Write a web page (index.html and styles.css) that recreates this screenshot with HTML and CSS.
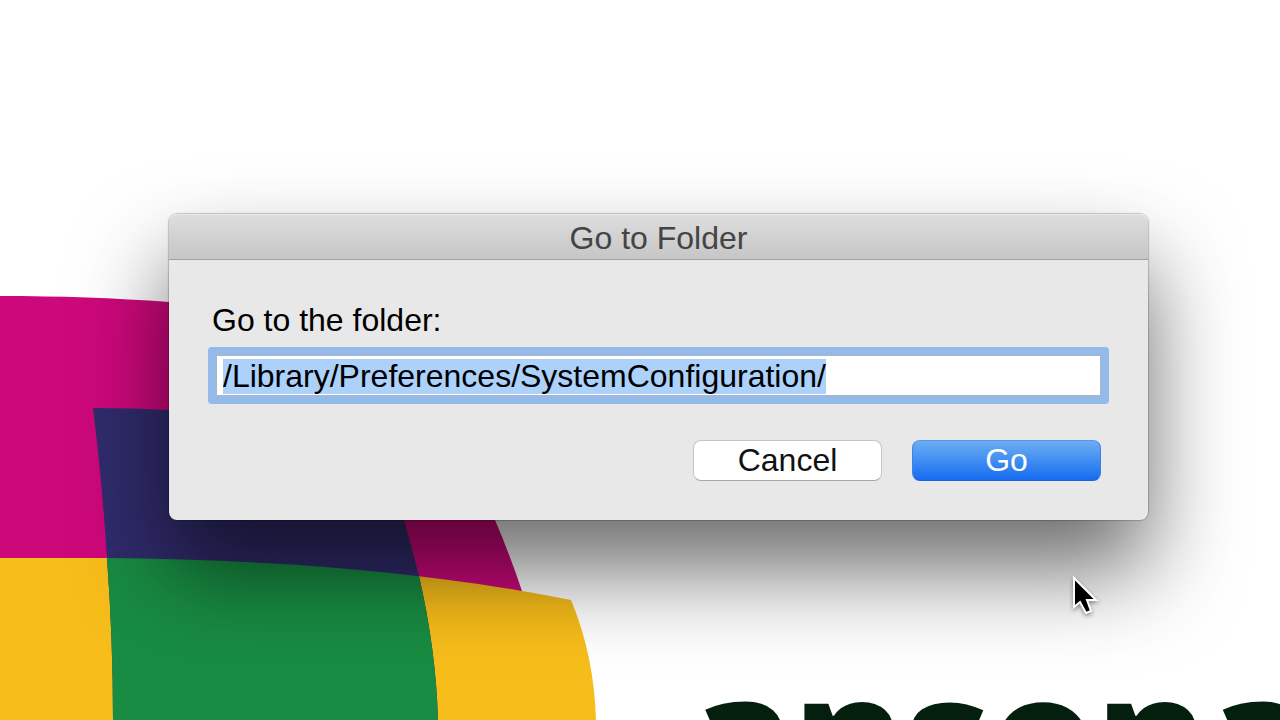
FILE: index.html
```html
<!DOCTYPE html>
<html lang="en">
<head>
  <meta charset="UTF-8">
  <meta name="viewport" content="width=device-width, initial-scale=1.0">
  <title>Go to Folder</title>
  <link rel="stylesheet" href="styles.css">
</head>
<body>
  <svg class="wallpaper" viewBox="0 0 1280 720" preserveAspectRatio="xMinYMin slice">
    <defs>
      <path id="column" d="M93 408 Q132 408 169 410 L360 420 Q388 465 404 520 Q412 548 419 576 Q436 650 438 720 H113 Q113 640 107 558 Q102 480 93 408 Z"/>
      <path id="lower" d="M0 558 H107 C270 560 420 570 571 600 Q594 655 596 720 H0 Z"/>
      <clipPath id="lower-clip"><use href="#lower"/></clipPath>
    </defs>
    <path fill="#cd087b" d="M0 296 C60 296 115 298 169 302 L400 340 Q462 430 495 520 Q510 555 522 591 L522 620 H0 Z"/>
    <use href="#lower" fill="#f7bd1a"/>
    <use href="#column" fill="#302b6c"/>
    <use href="#column" fill="#188c42" clip-path="url(#lower-clip)"/>
    <text class="wordmark" x="690" y="796">ansona</text>
  </svg>

  <main class="desktop">
    <form class="dialog" role="dialog" aria-labelledby="dialog-title">
      <h1 class="titlebar" id="dialog-title">Go to Folder</h1>
      <div class="dialog-body">
        <label class="label" for="folder-path">Go to the folder:</label>
        <input class="path-field" type="text" id="folder-path" value="/Library/Preferences/SystemConfiguration/" spellcheck="false" autocomplete="off">
        <div class="buttons">
          <button type="button" class="button">Cancel</button>
          <button type="submit" class="button button-default">Go</button>
        </div>
      </div>
    </form>
  </main>

  <svg class="cursor" width="32" height="44" viewBox="0 0 32 44">
    <path d="M4 3 V32 L10 27 L16 38 L21 36 L17 25 H26 Z" fill="#000" stroke="#fff" stroke-width="2"/>
  </svg>

  <script src="dialog.js"></script>
</body>
</html>
```
FILE: styles.css
```css
* {
  box-sizing: border-box;
}

body {
  margin: 0;
  min-height: 100vh;
  overflow: hidden;
  background: #fff;
  color: #000;
  font-family: "Liberation Sans", Helvetica, Arial, sans-serif;
  font-size: 32px;
  line-height: 36px;
}

/* Desktop */
.wallpaper {
  position: absolute;
  top: 0;
  left: 0;
  width: 100%;
  height: 100%;
}

.wordmark {
  font-family: "Open Sans", sans-serif;
  font-size: 166px;
  font-weight: 800;
  fill: #041f0d;
}

.desktop {
  position: relative;
  padding: 214px 132px 0 169px;
}

/* Dialog window */
.dialog {
  border-radius: 8px;
  background: #e8e8e8;
  box-shadow: 0 0 1px 1px rgba(0, 0, 0, 0.2), 0 50px 90px rgba(0, 0, 0, 0.58);
}

.titlebar {
  margin: 0;
  height: 46px;
  border-bottom: 1px solid #a0a0a0;
  border-radius: 8px 8px 0 0;
  background: linear-gradient(#dedede, #c6c6c6);
  box-shadow: inset 0 1px 0 #e8e8e8;
  color: #444;
  font-size: 32px;
  font-weight: 400;
  line-height: 48px;
  text-align: center;
}

.dialog-body {
  display: flex;
  flex-direction: column;
  padding: 42px 47px 39px 43px;
}

.label {
  margin-bottom: 17px;
}

/* Text field with focus ring */
.path-field {
  margin-left: 4px;
  padding: 3px 6px 1px;
  border: 1px solid #a9b4c6;
  border-radius: 0;
  outline: none;
  background: #fff;
  box-shadow: 0 0 0 8px #93bae9;
  color: #000;
  font: inherit;
  line-height: 35px;
}

.path-field:focus {
  border-radius: 1px;
}

.path-field::selection {
  background: #acd1fb;
  color: #000;
}

/* Buttons */
.buttons {
  display: flex;
  justify-content: flex-end;
  gap: 30px;
  margin-top: 44px;
}

.button {
  width: 189px;
  height: 41px;
  padding: 0 0 2px;
  border: 1px solid #c4c4c4;
  border-bottom-color: #a8a8a8;
  border-radius: 8px;
  background: #fff;
  color: #111;
  font: inherit;
}

.button-default {
  border-color: #5897e4 #3a83ea #1b62dc;
  background: linear-gradient(#6caef3, #166cf0);
  color: #fff;
}

/* Mouse pointer */
.cursor {
  position: absolute;
  top: 575px;
  left: 1070px;
  filter: drop-shadow(0 2px 2px rgba(0, 0, 0, 0.4));
}
```
FILE: dialog.js
```js
const field = document.getElementById('folder-path');
field.focus();
field.select();
```
